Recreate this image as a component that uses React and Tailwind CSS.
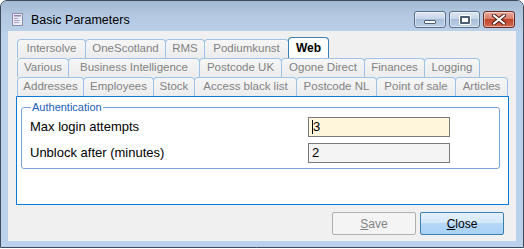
const ROW1 = [
  { label: 'Intersolve', w: 'w-[69px]' },
  { label: 'OneScotland', w: 'w-[81px]' },
  { label: 'RMS', w: 'w-[40px]' },
  { label: 'Podiumkunst', w: 'w-[85px]' },
]

const ROW2 = [
  { label: 'Various', w: 'w-[52px]' },
  { label: 'Business Intelligence', w: 'w-[132px]' },
  { label: 'Postcode UK', w: 'w-[83px]' },
  { label: 'Ogone Direct', w: 'w-[84px]' },
  { label: 'Finances', w: 'w-[61px]' },
  { label: 'Logging', w: 'w-[56px]' },
]

const ROW3 = [
  { label: 'Addresses', w: 'w-[67px]' },
  { label: 'Employees', w: 'w-[71px]' },
  { label: 'Stock', w: 'w-[42px]' },
  { label: 'Access black list', w: 'w-[103px]' },
  { label: 'Postcode NL', w: 'w-[81px]' },
  { label: 'Point of sale', w: 'w-[80px]' },
  { label: 'Articles', w: 'w-[53px]' },
]

const Tab = ({ label, w }) => (
  <div className={`${w} h-[19px] -ml-px first:ml-0 flex-shrink-0 border border-b-0 border-[#9ec3e6] rounded-t-[4px] bg-[linear-gradient(to_bottom,#f6f6f6,#ececec)] flex items-center justify-center text-[11.5px] text-[#838383] leading-none`}>
    {label}
  </div>
)

const TitleIcon = () => (
  <svg width="11" height="13" viewBox="0 0 11 13">
    <rect x="0.5" y="0.5" width="10" height="12" fill="#ecebf4" stroke="#8f8cae" />
    <rect x="2" y="2" width="7" height="1.5" fill="#8a84b8" />
    <rect x="2" y="5" width="4" height="1" fill="#a9a4c8" />
    <rect x="2" y="7" width="6" height="1" fill="#a9a4c8" />
    <rect x="2" y="9" width="5" height="1" fill="#a9a4c8" />
  </svg>
)

const capBtn = 'h-[17px] rounded-[3px] border border-[#5a6f88] flex items-center justify-center shadow-[inset_0_0_0_1px_rgba(255,255,255,0.45)]'

export default function App() {
  return (
    <div className="w-[524px] h-[249px] bg-white" style={{ fontFamily: '"Liberation Sans", Arial, sans-serif' }}>
      <div className="w-[524px] h-[248px] border border-[#3d4b5c] rounded-t-[7px] bg-[#b9d1ea] flex flex-col overflow-hidden">

        {/* Title bar */}
        <div className="h-[30px] flex-shrink-0 flex items-start bg-[linear-gradient(to_bottom,#a3bad4,#b4c9e1_50%,#bad0e8)] pl-[11px] pr-[8px]">
          <div className="mt-[12px]"><TitleIcon /></div>
          <span className="ml-[8px] mt-[13px] text-[12.5px] text-black leading-none">Basic Parameters</span>
          <div className="ml-auto mt-[10px] flex gap-[3px]">
            <div className={`${capBtn} w-[32px] bg-[linear-gradient(to_bottom,#dfe8f3,#c3d3e6_50%,#a9bfd9_50%,#bcd0e6)]`}>
              <div className="w-[12px] h-[4px] mt-[5px] bg-white border border-[#4c5e74] rounded-[1px]" />
            </div>
            <div className={`${capBtn} w-[31px] bg-[linear-gradient(to_bottom,#dfe8f3,#c3d3e6_50%,#a9bfd9_50%,#bcd0e6)]`}>
              <div className="w-[10px] h-[8px] border-[2px] border-[#4c5e74] bg-white rounded-[1px] shadow-[0_0_0_1px_white]" />
            </div>
            <div className={`${capBtn} w-[32px] border-[#6b2a22] bg-[linear-gradient(to_bottom,#e7aa9d,#d77a66_50%,#c0432c_50%,#d06a4f)]`}>
              <svg width="14" height="11" viewBox="0 0 14 11">
                <path d="M2 1.5 L12 9.5 M12 1.5 L2 9.5" stroke="#4a1a14" strokeWidth="4" strokeLinecap="round" />
                <path d="M2 1.5 L12 9.5 M12 1.5 L2 9.5" stroke="#ffffff" strokeWidth="2.2" strokeLinecap="round" />
              </svg>
            </div>
          </div>
        </div>

        {/* Client area */}
        <div className="ml-[7px] w-[508px] h-[210px] bg-[#f0f0f0] flex flex-col">

          {/* Tab rows */}
          <div className="pl-[9px] pt-[8px] flex flex-col">
            <div className="flex h-[19px] items-start">
              {ROW1.map(t => <Tab key={t.label} {...t} />)}
              <div className="w-[41px] h-[21px] -mt-[2px] -ml-px flex-shrink-0 border border-b-0 border-[#3c7fb1] rounded-t-[4px] bg-white flex items-center justify-center text-[12px] font-bold text-black leading-none">
                Web
              </div>
            </div>
            <div className="flex h-[19px]">
              {ROW2.map(t => <Tab key={t.label} {...t} />)}
            </div>
            <div className="flex h-[19px]">
              {ROW3.map(t => <Tab key={t.label} {...t} />)}
            </div>
          </div>

          {/* Tab panel */}
          <div className="ml-[8px] w-[493px] h-[109px] border border-[#0a7ad8] bg-white pl-[4px] pr-[8px] pt-[4px]">
            <fieldset className="border border-[#7aa2d6] rounded-[3px] pl-[8px] pr-[49px] pb-[9px] h-[68px]">
              <legend className="ml-[1px] px-[1px] text-[11px] text-[#2060b8] leading-[12px]">Authentication</legend>
              <div className="flex items-center justify-between h-[20px] mt-[4px]">
                <span className="text-[13px] text-black">Max login attempts</span>
                <div className="w-[142px] h-[20px] border border-[#7a7a7a] bg-[#fff6dc] flex items-center pl-[3px] text-[13px] text-black">
                  <span className="w-px h-[14px] bg-black" />
                  <span>3</span>
                </div>
              </div>
              <div className="flex items-center justify-between h-[20px] mt-[6px]">
                <span className="text-[13px] text-black">Unblock after (minutes)</span>
                <div className="w-[142px] h-[20px] border border-[#7a7a7a] bg-[#f4f4f4] flex items-center pl-[3px] text-[13px] text-black">
                  2
                </div>
              </div>
            </fieldset>
          </div>

          {/* Buttons */}
          <div className="flex justify-end gap-[4px] pr-[12px] mt-[7px]">
            <button className="w-[84px] h-[23px] border border-[#adb2b5] rounded-[2px] bg-[#f4f4f4] text-[12px] text-[#838383]">
              <span className="underline">S</span>ave
            </button>
            <button className="w-[84px] h-[23px] border border-[#3c7fb1] rounded-[2px] bg-[linear-gradient(to_bottom,#e4f0fc,#d4e8fb_45%,#b6d8f6_50%,#a9d1f5)] text-[12px] text-black">
              <span className="underline">C</span>lose
            </button>
          </div>
        </div>
      </div>
    </div>
  )
}
